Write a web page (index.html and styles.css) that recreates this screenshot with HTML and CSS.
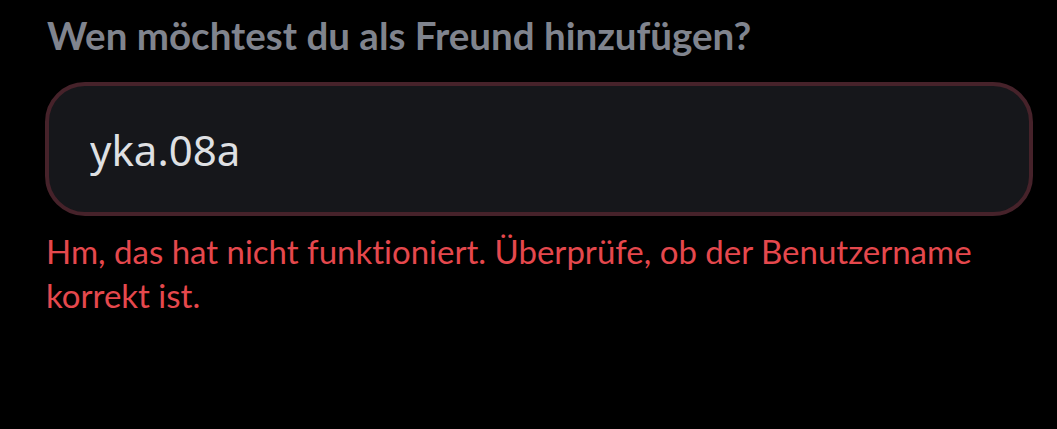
FILE: index.html
```html
<!DOCTYPE html>
<html lang="de">
<head>
    <meta charset="UTF-8">
    <meta name="viewport" content="width=device-width, initial-scale=1.0">
    <title>Freund hinzufügen</title>
    <link rel="stylesheet" href="styles.css">
</head>
<body>
    <div class="add-friend">
        <h2 class="label">Wen möchtest du als Freund hinzufügen?</h2>
        <div class="field">
            <input type="text" class="username" value="yka.08a">
        </div>
        <p class="error">Hm, das hat nicht funktioniert. Überprüfe, ob der Benutzername korrekt ist.</p>
    </div>
</body>
</html>
```

FILE: styles.css
```css
body {
    margin: 0;
    background-color: #000;
    font-family: "Lato", "Noto Sans", sans-serif;
    font-variant-ligatures: none;
}
.add-friend {
    padding: 15px 24px 0 45px;
}
.label {
    margin: 0 0 27px 2px;
    font-size: 38.5px;
    font-weight: 700;
    line-height: 40px;
    color: #80848e;
}
.field {
    background-color: #16171b;
    border: 4px solid #46222a;
    border-radius: 40px;
    height: 134px;
    box-sizing: border-box;
    display: flex;
    align-items: center;
    padding: 0 41px;
}
.username {
    flex: 1;
    background: transparent;
    border: none;
    outline: none;
    font-family: "Noto Sans", sans-serif;
    font-size: 42px;
    color: #dfe0e3;
    padding: 0;
}
.error {
    margin: 13px 0 0 1px;
    max-width: 960px;
    font-size: 33px;
    line-height: 44px;
    color: #e5484d;
}
```
